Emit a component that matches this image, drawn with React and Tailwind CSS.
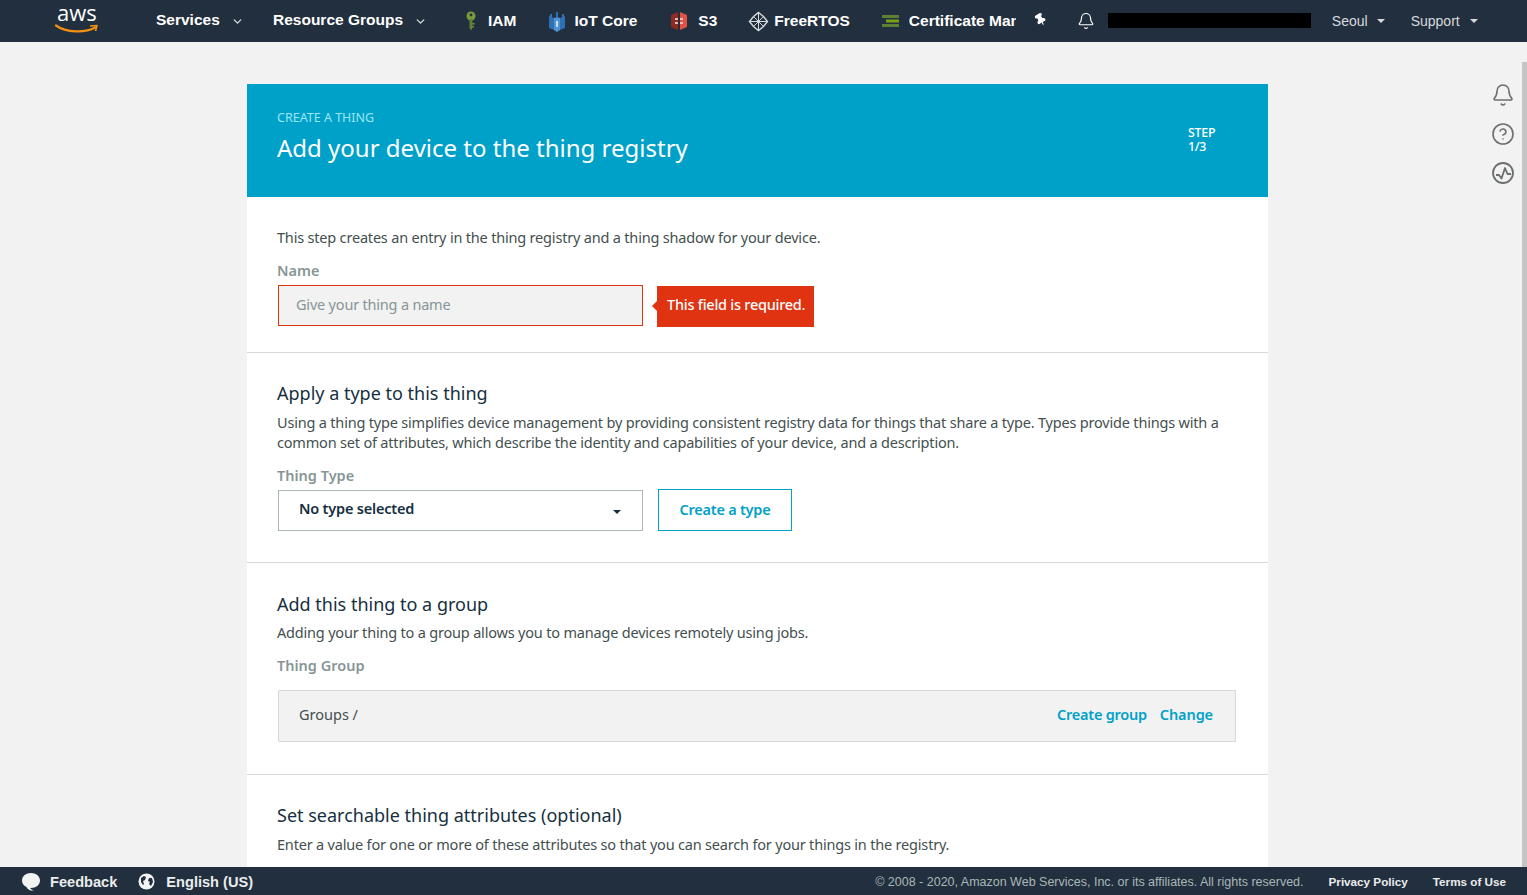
import React from "react";
import { Bell, ChevronDown, CircleHelp, Pin } from "lucide-react";

const AwsLogo = () => (
  <svg width="46" height="30" viewBox="0 0 46 30" fill="none" className="ml-[54px] mb-[6px]">
    <text x="3" y="18" fill="#ffffff" fontSize="22" fontFamily="'Open Sans', sans-serif">aws</text>
    <path d="M2 22.500 C12 30 32 30 41 24.500" stroke="#f29111" strokeWidth="2.2" strokeLinecap="round" />
    <path d="M36 23 L43 22.500 L41.500 28" stroke="#f29111" strokeWidth="1.6" strokeLinejoin="round" />
  </svg>
);

const IamIcon = () => (
  <svg width="14" height="20" viewBox="0 0 14 20">
    <ellipse cx="7" cy="5" rx="4.5" ry="4.5" fill="#7b9c3c" />
    <circle cx="7" cy="4" r="1.4" fill="#222f3e" />
    <path d="M5.500 8h3v9l-1.500 2.500L5.500 17z" fill="#5f8231" />
    <path d="M8.500 12h2v1.500h-2zM8.500 15h1.500v1.500H8.500z" fill="#7b9c3c" />
  </svg>
);

const IotIcon = () => (
  <svg width="20" height="21" viewBox="0 0 20 21">
    <path d="M2 5l5 2v12l-5-2zM18 5l-5 2v12l5-2z" fill="#2f6fb4" />
    <path d="M7 7l3-1 3 1v12l-3 2-3-2z" fill="#5294cf" />
    <path d="M9 1h2v6H9zM3 3h2v5H3zM15 3h2v5h-2z" fill="#2f6fb4" />
    <path d="M9 10h2v6H9z" fill="#c8dff2" />
  </svg>
);

const S3Icon = () => (
  <svg width="18" height="20" viewBox="0 0 18 20">
    <path d="M1 4l7-3v18l-7-3z" fill="#8c2b22" />
    <path d="M17 4l-7-3v18l7-3z" fill="#e05243" />
    <path d="M5 7h3v2H5zM10 7h3v2h-3zM5 11h3v2H5zM10 11h3v2h-3z" fill="#f2b8b0" />
  </svg>
);

const FreeRtosIcon = () => (
  <svg width="21" height="21" viewBox="0 0 21 21" fill="none" stroke="#d7dadd" strokeWidth="1.4">
    <path d="M10.500 1.500l5 4 4 5-4 5-5 4-5-4-4-5 4-5z" />
    <path d="M10.500 1.500v18M1.500 10.500h18M5.500 5.500l10 10M15.500 5.500l-10 10" strokeWidth="1" />
  </svg>
);

const CertIcon = () => (
  <svg width="17" height="12" viewBox="0 0 17 12" className="shrink-0">
    <path d="M0 0h17v3H0z" fill="#5c7f33" />
    <path d="M4 4.500h13v3H4z" fill="#7aa116" />
    <path d="M0 9h17v3H0z" fill="#5c7f33" />
  </svg>
);

const Shortcut = ({ icon, label, className }) => (
  <div className={`flex items-center ${className}`}>
    {icon}
    <span className="text-[15.5px] font-bold text-white whitespace-nowrap">{label}</span>
  </div>
);

const Header = () => (
  <header className="h-[42px] shrink-0 bg-[#222f3e] flex items-center font-['Liberation_Sans',sans-serif]">
    <div className="w-[156px] shrink-0">
      <AwsLogo />
    </div>
    <div className="flex items-center text-[15.5px] font-bold text-white w-[64px] shrink-0 mb-[3px]">Services</div>
    <ChevronDown size={13} strokeWidth={2.5} className="ml-[11px] text-[#d7dadd]" />
    <div className="ml-[29px] text-[15.5px] font-bold text-white whitespace-nowrap mb-[3px]">Resource Groups</div>
    <ChevronDown size={13} strokeWidth={2.5} className="ml-[11px] text-[#d7dadd]" />
    <Shortcut icon={<IamIcon />} label="IAM" className="ml-[37px] gap-[10px]" />
    <Shortcut icon={<IotIcon />} label="IoT Core" className="ml-[31px] gap-[7px]" />
    <Shortcut icon={<S3Icon />} label="S3" className="ml-[33px] gap-[10px]" />
    <Shortcut icon={<FreeRtosIcon />} label="FreeRTOS" className="ml-[31px] gap-[5px]" />
    <div className="ml-[32px] flex items-center gap-[10px] w-[134px] overflow-hidden shrink-0">
      <CertIcon />
      <span className="text-[15.5px] font-bold text-white whitespace-nowrap">Certificate Manager</span>
    </div>
    <Pin size={13} fill="#ffffff" className="ml-[18px] text-white rotate-[-30deg] mb-[3px]" />
    <Bell size={18} strokeWidth={1.6} className="ml-[30px] text-white" />
    <div className="ml-[13px] w-[203px] h-[15px] bg-black mb-[2px]" />
    <span className="ml-[21px] text-[14px] text-[#d7dadd]">Seoul</span>
    <span className="ml-[9px] w-0 h-0 border-x-[4px] border-x-transparent border-t-[4px] border-t-[#d7dadd]" />
    <span className="ml-[26px] text-[14px] text-[#d7dadd]">Support</span>
    <span className="ml-[10px] w-0 h-0 border-x-[4px] border-x-transparent border-t-[4px] border-t-[#d7dadd]" />
  </header>
);

const Section = ({ title, children, className }) => (
  <section className={`px-[30px] border-b border-[#d5dbdb] ${className}`}>
    {title && <h2 className="text-[18px] leading-[24px] text-[#16303f]">{title}</h2>}
    {children}
  </section>
);

const Label = ({ children, className }) => (
  <div className={`text-[14.5px] leading-[20px] font-semibold text-[#879596] ${className}`}>{children}</div>
);

const bodyText = "text-[14.5px] leading-[20px] text-[#444f4f] tracking-[-0.19px]";

const App = () => (
  <div className="h-[895px] flex flex-col overflow-hidden bg-[#f2f2f2] font-['Noto_Sans',sans-serif]">
    <Header />

    <main className="relative flex-1 min-h-0 overflow-hidden flex pl-[247px]">
      <div className="mt-[42px] w-[1021px] shrink-0 bg-white">
        <div className="h-[113px] bg-[#00a1c9] pl-[30px] pr-[51px] pt-[25px] flex items-start justify-between">
          <div>
            <div className="text-[12.5px] leading-[18px] text-[#99e6f5]">CREATE A THING</div>
            <h1 className="mt-[3px] text-[24px] leading-[36px] text-white">Add your device to the thing registry</h1>
          </div>
          <div className="mt-[17px] text-[12.5px] leading-[14px] text-white font-medium w-[29px] tracking-[-0.3px]">
            STEP
            <br />
            1/3
          </div>
        </div>

        <Section className="h-[156px] pt-[30px]">
          <p className={bodyText}>
            This step creates an entry in the thing registry and a thing shadow for your device.
          </p>
          <Label className="mt-[13px]">Name</Label>
          <div className="mt-[5px] flex items-start">
            <div className="ml-px w-[365px] h-[41px] border border-[#df3312] bg-[#f2f2f2] pl-[17px] pb-[2px] flex items-center text-[14.5px] text-[#879596] tracking-[-0.2px]">
              Give your thing a name
            </div>
            <div className="relative ml-[14px] mt-[1px] w-[157px] h-[41px] bg-[#df3312] flex items-center pl-[10px] pb-[3px] text-[14.5px] font-medium text-white tracking-[-0.25px]">
              <span className="absolute left-[-5px] top-[15px] w-0 h-0 border-y-[5px] border-y-transparent border-r-[5px] border-r-[#df3312]" />
              This field is required.
            </div>
          </div>
        </Section>

        <Section title="Apply a type to this thing" className="h-[210px] pt-[28px]">
          <p className={`mt-[7px] ${bodyText}`}>
            Using a thing type simplifies device management by providing consistent registry data for things that share a type. Types provide things with a common set of attributes, which describe the identity and capabilities of your device, and a description.
          </p>
          <Label className="mt-[13px]">Thing Type</Label>
          <div className="mt-[4px] flex items-center">
            <div className="ml-px w-[365px] h-[41px] border border-[#aab7b8] flex items-center pl-[20px] pr-[21px] pb-[3px] justify-between text-[14.5px] font-semibold text-[#16303f] tracking-[-0.2px]">
              No type selected
              <span className="w-0 h-0 mt-[6px] border-x-[4.5px] border-x-transparent border-t-[4.5px] border-t-[#16303f]" />
            </div>
            <div className="ml-[15px] w-[134px] h-[42px] border border-[#00a1c9] flex items-center justify-center text-[14.5px] font-semibold text-[#00a1c9] tracking-[-0.25px]">
              Create a type
            </div>
          </div>
        </Section>

        <Section title="Add this thing to a group" className="h-[212px] pt-[29px]">
          <p className={`mt-[6px] ${bodyText}`}>
            Adding your thing to a group allows you to manage devices remotely using jobs.
          </p>
          <Label className="mt-[13px]">Thing Group</Label>
          <div className="mt-[15px] ml-px w-[958px] h-[52px] border border-[#d5dbdb] bg-[#f2f2f2] flex items-center pl-[20px] pr-[22px] pb-[2px] text-[14.5px]">
            <span className="text-[#444f4f]">Groups /</span>
            <span className="ml-auto font-semibold text-[#00a1c9] tracking-[-0.25px]">Create group</span>
            <span className="ml-[13px] font-semibold text-[#00a1c9] tracking-[-0.1px]">Change</span>
          </div>
        </Section>

        <div className="px-[30px] pt-[28px]">
          <h2 className="text-[18px] leading-[24px] text-[#16303f]">Set searchable thing attributes (optional)</h2>
          <p className={`mt-[7px] ${bodyText}`}>
            Enter a value for one or more of these attributes so that you can search for your things in the registry.
          </p>
        </div>
      </div>

      <div className="ml-[223px] pt-[41px] flex flex-col items-center gap-[15px] text-[#6b6f6f]">
        <Bell size={24} strokeWidth={1.6} />
        <CircleHelp size={24} strokeWidth={1.6} />
        <svg width="24" height="24" viewBox="0 0 24 24" fill="none" stroke="currentColor" strokeWidth="1.8">
          <circle cx="12" cy="12" r="10" />
          <path d="M5 14h3l2.500 3.500L14 7l2.500 6H20" strokeLinejoin="round" />
        </svg>
      </div>

      <div className="absolute right-0 top-[20px] bottom-0 w-[5px] bg-[#c4c4c4]" />
    </main>

    <footer className="h-[28px] shrink-0 bg-[#222f3e] flex items-center font-['Liberation_Sans',sans-serif]">
      <svg width="20" height="19" viewBox="0 0 20 19" className="ml-[21px] shrink-0" fill="#f2f3f3">
        <path d="M10 1c5 0 9 3 9 7.500S15 16 10 16l-1 0c1 1 2 2 4 2.500C10 19 7 18 5.500 15 3 14 1 11.500 1 8.500 1 4 5 1 10 1z" />
      </svg>
      <span className="ml-[9px] mt-[3px] text-[14.6px] font-bold text-[#eaeded]">Feedback</span>
      <svg width="17" height="17" viewBox="0 0 17 17" className="ml-[21px] shrink-0">
        <circle cx="8.500" cy="8.500" r="8" fill="#f2f3f3" />
        <path d="M3 5l3-2 2 1-1 3-2 1 1 3-1 1-2-3zM11 5l3 0 1 4-2 4-2-2 1-2-2-1z" fill="#222f3e" />
      </svg>
      <span className="ml-[11px] mt-[3px] text-[14.6px] font-bold text-[#eaeded]">English (US)</span>
      <span className="ml-auto mt-[2px] text-[12.5px] text-[#aab7b8]">© 2008 - 2020, Amazon Web Services, Inc. or its affiliates. All rights reserved.</span>
      <span className="ml-[25px] mt-[2px] text-[11.7px] font-bold text-[#eaeded]">Privacy Policy</span>
      <span className="ml-[25px] mt-[2px] mr-[21px] text-[11.7px] font-bold text-[#eaeded]">Terms of Use</span>
    </footer>
  </div>
);

export default App;
